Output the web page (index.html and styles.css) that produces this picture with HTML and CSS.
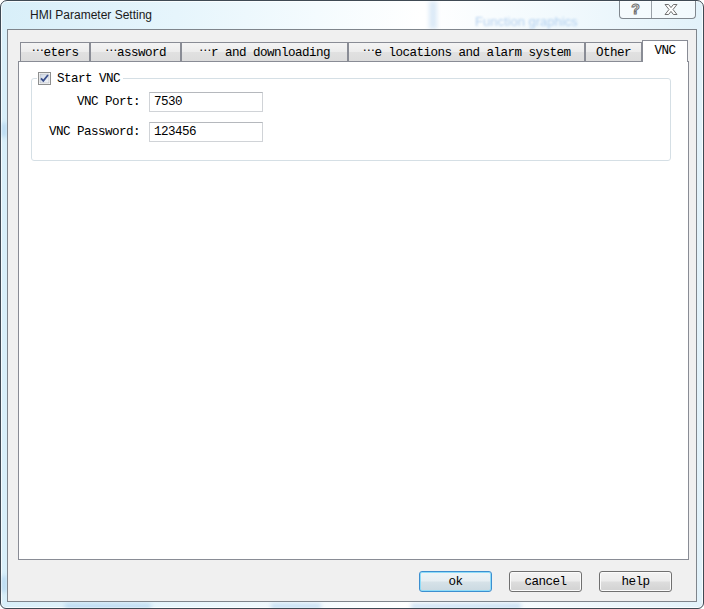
FILE: index.html
```html
<!DOCTYPE html>
<html>
<head>
<meta charset="utf-8">
<title>HMI Parameter Setting</title>
<link rel="stylesheet" href="styles.css">
</head>
<body>
<div class="window">
  <span class="ghost ghost-top">Function graphics</span>
  <span class="blob blob-b1"></span>
  <span class="blob blob-b2"></span>
  <span class="blob blob-b3"></span>
  <span class="blob blob-l1"></span>
  <span class="blob blob-l2"></span>
  <span class="blob blob-t1"></span>
  <div class="titlebar">
    <span class="title">HMI Parameter Setting</span>
    <div class="caption">
      <div class="cap-btn cap-help"><span class="cap-q">?</span></div>
      <div class="cap-btn cap-close">
        <svg width="14" height="11" viewBox="0 0 14 11"><path d="M1 .5H4.6L7 3.6 9.4.5H13L9 5.5 13 10.5H9.4L7 7.4 4.6 10.5H1L5 5.5Z" fill="#fff" stroke="#707070" stroke-width="1"/></svg>
      </div>
    </div>
  </div>
  <div class="client">
    <div class="tabs">
      <div class="tab t1"><span class="ell">⋯</span>eters</div>
      <div class="tab t2"><span class="ell">⋯</span>assword</div>
      <div class="tab t3"><span class="ell">⋯</span>r and downloading</div>
      <div class="tab t4"><span class="ell">⋯</span>e locations and alarm system</div>
      <div class="tab t5">Other</div>
      <div class="tab tab-sel">VNC</div>
    </div>
    <div class="panel">
      <fieldset class="group">
        <legend class="legend">
          <span class="check">
            <svg width="13" height="13" viewBox="0 0 13 13">
              <defs><linearGradient id="cg" x1="0" y1="0" x2="1" y2="1"><stop offset="0" stop-color="#cdd6e3"/><stop offset="1" stop-color="#f5f7fa"/></linearGradient></defs>
              <rect x=".5" y=".5" width="12" height="12" fill="#fff" stroke="#8e8f8f"/>
              <rect x="2" y="2" width="9" height="9" fill="url(#cg)" stroke="#aeb3b9" stroke-width=".6"/>
              <path d="M3 6.3 5.3 8.8 10 3" fill="none" stroke="#3a4f8c" stroke-width="1.8"/>
            </svg>
          </span>
          <span class="legend-text">Start VNC</span>
        </legend>
        <div class="form">
          <span class="label">VNC Port:</span>
          <span class="input">7530</span>
          <span class="label">VNC Password:</span>
          <span class="input">123456</span>
        </div>
      </fieldset>
    </div>
    <div class="buttons">
      <div class="btn btn-default">ok</div>
      <div class="btn">cancel</div>
      <div class="btn">help</div>
    </div>
  </div>
</div>
</body>
</html>
```
FILE: styles.css
```css
html, body {
  margin: 0;
  padding: 0;
}
body {
  width: 704px;
  height: 609px;
  overflow: hidden;
  background: #ffffff;
  font-family: "Liberation Mono", "DejaVu Sans Mono", monospace;
  font-size: 12.6px;
  letter-spacing: -0.56px;
  color: #000;
}
.window {
  position: relative;
  width: 704px;
  height: 609px;
  box-sizing: border-box;
  border: 1px solid #3f4a54;
  border-radius: 7px 7px 6px 6px;
  background: linear-gradient(90deg, #d8eff9 0%, #e6f5fc 25%, #f4fbfe 45%, #ffffff 60%, #f1f9fd 80%, #e2f2fa 100%);
  box-shadow: inset 0 0 0 1px rgba(255,255,255,0.75);
  display: flex;
  flex-direction: column;
  overflow: hidden;
}
.ghost {
  position: absolute;
  font-family: "Liberation Sans", sans-serif;
  color: #4f8fd8;
  opacity: 0.4;
  filter: blur(1.3px);
  font-size: 13px;
  letter-spacing: 0;
  white-space: nowrap;
}
.ghost-top { left: 474px; top: 13px; }
.blob {
  position: absolute;
  background: #8fbde6;
  filter: blur(2px);
  opacity: 0.55;
}
.blob-b1 { left: 64px; top: 603px; width: 86px; height: 4px; }
.blob-b2 { left: 270px; top: 603px; width: 50px; height: 4px; }
.blob-b3 { left: 410px; top: 603px; width: 110px; height: 4px; }
.blob-l1 { left: 1px; top: 122px; width: 4px; height: 14px; }
.blob-l2 { left: 1px; top: 575px; width: 4px; height: 16px; }
.blob-t1 { left: 428px; top: 0; width: 8px; height: 28px; opacity: 0.3; }
.titlebar {
  position: relative;
  height: 28px;
  display: flex;
  align-items: flex-start;
  padding: 0 7px 0 29px;
}
.title {
  font-family: "Liberation Sans", Arial, sans-serif;
  font-size: 12px;
  letter-spacing: 0;
  line-height: 29px;
  color: #1a1a1a;
}
.caption {
  margin-left: auto;
  margin-top: -1px;
  display: flex;
  height: 19px;
  box-sizing: border-box;
  border: 1px solid #80878e;
  border-top: none;
  border-radius: 0 0 4px 4px;
  background: rgba(255,255,255,0.55);
}
.cap-btn {
  display: flex;
  align-items: center;
  justify-content: center;
}
.cap-help {
  width: 31px;
  border-right: 1px solid #9aa1a8;
}
.cap-close {
  width: 43px;
  padding-right: 6px;
  box-sizing: border-box;
}
.cap-q {
  font-family: "Liberation Sans", sans-serif;
  font-weight: bold;
  font-size: 14px;
  letter-spacing: 0;
  line-height: 14px;
  color: #fff;
  -webkit-text-stroke: 1px #707070;
}
.client {
  margin: 0 6px;
  height: 573px;
  box-sizing: border-box;
  border: 1px solid #7f858c;
  background: #f0f0f0;
  padding: 10px 7px 9px 10px;
  display: flex;
  flex-direction: column;
  position: relative;
}
.tabs {
  display: flex;
  align-items: flex-end;
  height: 21px;
  padding-left: 2px;
}
.tab {
  height: 19px;
  box-sizing: border-box;
  border: 1px solid #898c95;
  border-bottom: none;
  background: linear-gradient(#f4f4f4 0%, #ececec 50%, #e1e1e1 51%, #dcdcdc 100%);
  display: flex;
  align-items: center;
  justify-content: center;
  white-space: nowrap;
  padding-top: 2px;
}
.ell {
  display: inline-block;
  width: 12px;
  font-family: "DejaVu Sans", sans-serif;
  font-size: 12px;
  letter-spacing: 0;
  text-align: left;
  transform: translateY(-3px);
}
.t1 { width: 70px; }
.t2 { width: 91px; }
.t3 { width: 167px; }
.t4 { width: 237px; }
.t5 { width: 57px; }
.tab-sel {
  width: 46px;
  height: 22px;
  margin-bottom: -1px;
  background: #ffffff;
  position: relative;
  z-index: 1;
  padding-top: 1px;
  padding-bottom: 2px;
}
.panel {
  height: 499px;
  box-sizing: border-box;
  border: 1px solid #898c95;
  background: #ffffff;
  padding: 10px 0 0 12px;
}
.group {
  margin: 0;
  width: 640px;
  box-sizing: border-box;
  border: 1px solid #d5dfe5;
  border-radius: 3px;
  padding: 7px 0 18px 0;
}
.legend {
  margin-left: 5px;
  padding: 0 3px 0 1px;
  height: 13px;
  display: flex;
  align-items: center;
  gap: 6px;
  line-height: 13px;
}
.legend-text {
  padding-top: 1px;
}
.check {
  width: 13px;
  height: 13px;
  display: block;
}
.check svg { display: block; }
.form {
  display: grid;
  grid-template-columns: 91px 114px;
  grid-auto-rows: 20px;
  column-gap: 9px;
  row-gap: 10px;
  padding-left: 17px;
}
.label {
  text-align: right;
  height: 20px;
  line-height: 21px;
  white-space: nowrap;
}
.input {
  height: 20px;
  box-sizing: border-box;
  border: 1px solid #d0d3d7;
  border-top-color: #b5b8bd;
  background: #fff;
  padding-left: 4px;
  line-height: 19px;
}
.buttons {
  margin-top: 11px;
  display: flex;
  justify-content: flex-end;
  gap: 17px;
  padding-right: 17px;
}
.btn {
  width: 73px;
  height: 21px;
  box-sizing: border-box;
  border: 1px solid #707070;
  border-radius: 3px;
  background: linear-gradient(#f3f3f3 0%, #ececec 48%, #dddddd 52%, #d2d2d2 100%);
  box-shadow: inset 0 0 0 1px #fbfbfb;
  display: flex;
  align-items: center;
  justify-content: center;
  padding-top: 1px;
}
.btn-default {
  border-color: #3c8fd0;
  box-shadow: inset 0 0 0 1px #8fdcf8;
  background: linear-gradient(#eef4f7 0%, #e6eef2 48%, #d6e2e8 52%, #cad9e1 100%);
}
```
